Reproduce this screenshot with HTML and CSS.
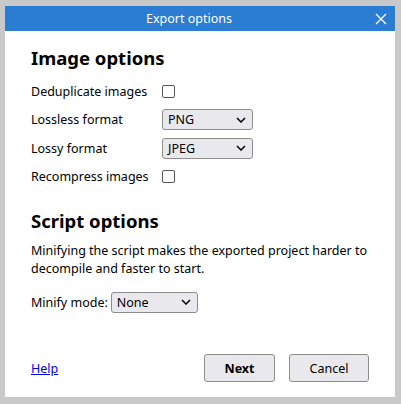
FILE: index.html
```html
<!DOCTYPE html>
<html>
<head>
<meta charset="utf-8">
<link rel="stylesheet" href="styles.css">
</head>
<body>
<div class="window">
  <div class="titlebar">
    <span class="title">Export options</span>
    <svg class="close" width="12" height="12" viewBox="0 0 12 12"><path d="M1 1L11 11M11 1L1 11" stroke="#fff" stroke-width="1.4"/></svg>
  </div>
  <div class="content">
    <h2 class="heading">Image options</h2>
    <div class="row">
      <span class="label">Deduplicate images</span>
      <span class="checkbox"></span>
    </div>
    <div class="row">
      <span class="label">Lossless format</span>
      <span class="select wide">PNG<svg class="chev" width="10" height="6" viewBox="0 0 10 6"><path d="M1 1L5 5L9 1" fill="none" stroke="#000" stroke-width="1.5"/></svg></span>
    </div>
    <div class="row">
      <span class="label">Lossy format</span>
      <span class="select wide">JPEG<svg class="chev" width="10" height="6" viewBox="0 0 10 6"><path d="M1 1L5 5L9 1" fill="none" stroke="#000" stroke-width="1.5"/></svg></span>
    </div>
    <div class="row">
      <span class="label">Recompress images</span>
      <span class="checkbox"></span>
    </div>
    <h2 class="heading second">Script options</h2>
    <p class="desc">Minifying the script makes the exported project harder to decompile and faster to start.</p>
    <div class="row minify">
      <span class="label-inline">Minify mode:</span>
      <span class="select narrow">None<svg class="chev" width="10" height="6" viewBox="0 0 10 6"><path d="M1 1L5 5L9 1" fill="none" stroke="#000" stroke-width="1.5"/></svg></span>
    </div>
    <div class="footer">
      <a class="help" href="#">Help</a>
      <div class="buttons">
        <span class="btn primary">Next</span>
        <span class="btn">Cancel</span>
      </div>
    </div>
  </div>
</div>
</body>
</html>
```
FILE: styles.css
```css
html, body {
  margin: 0;
  padding: 0;
  background: #c9c9c9;
  font-family: "Noto Sans", "Open Sans", sans-serif;
  font-size: 12.5px;
  color: #000;
}
.window {
  margin: 6px 6px 0 5px;
  width: 390px;
  height: 391px;
  background: #fff;
  display: flex;
  flex-direction: column;
}
.titlebar {
  height: 25px;
  background: #2b7cd3;
  color: #fff;
  display: flex;
  align-items: center;
  justify-content: center;
  position: relative;
  font-size: 12.5px;
}
.title {
  margin-left: -22px;
}
.close {
  position: absolute;
  right: 8px;
  top: 7px;
}
.content {
  padding: 0 26px;
  flex: 1;
  display: flex;
  flex-direction: column;
}
.heading {
  margin: 14px 0 6px;
  font-size: 18.5px;
  font-weight: bold;
  line-height: 26px;
}
.heading.second {
  margin-top: 17px;
  margin-bottom: 8px;
}
.row {
  display: flex;
  align-items: center;
  height: 28.5px;
}
.label {
  width: 131px;
}
.checkbox {
  width: 11px;
  height: 11px;
  border: 1px solid #555;
  border-radius: 2px;
  margin-left: 0;
}
.select {
  box-sizing: border-box;
  height: 21px;
  border: 1px solid #8d8d8d;
  border-radius: 3px;
  background: #e9e9ed;
  display: flex;
  align-items: center;
  justify-content: space-between;
  padding: 0 6px 0 5px;
}
.select.wide { width: 91px; }
.select.narrow { width: 87px; margin-left: 3px; }
.chev { display: block; }
.desc {
  margin: 0 0 10px;
  line-height: 18px;
}
.footer {
  margin-top: auto;
  margin-bottom: 15px;
  display: flex;
  align-items: center;
  justify-content: space-between;
}
.help {
  color: #0000ee;
  text-decoration: underline;
}
.buttons {
  display: flex;
  gap: 14px;
}
.btn {
  box-sizing: border-box;
  height: 28px;
  border: 1px solid #8d8d8d;
  border-radius: 3px;
  background: #e9e9ed;
  display: flex;
  align-items: center;
  justify-content: center;
  width: 80px;
}
.btn.primary {
  width: 71px;
  font-weight: bold;
}
```
